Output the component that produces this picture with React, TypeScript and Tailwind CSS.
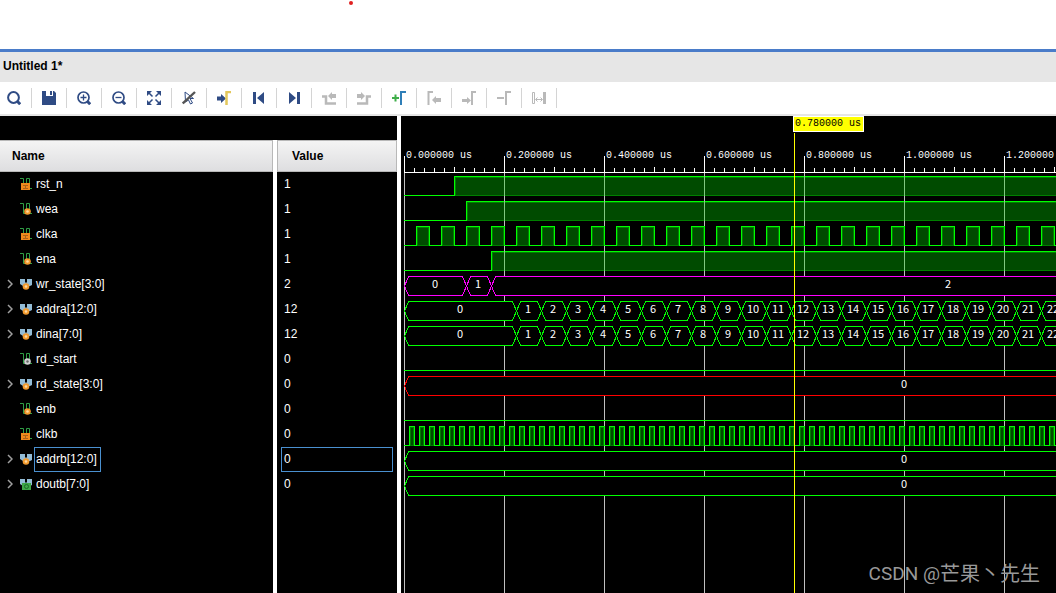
import { useEffect, useRef, useState, type ReactNode } from "react";
import clsx from "clsx";

type Badge = "box" | "dot" | "grey" | "green";

type Segment = { from: number; to: number; value: string };

type Wave =
  | { kind: "step"; rise: number }
  | { kind: "clock"; first: number; high: number; period: number }
  | { kind: "low" }
  | { kind: "bus"; color: string; segments: Segment[] };

type Signal = { name: string; value: string; badge: Badge; bus?: boolean; wave: Wave };

const ROW = 25;
const GREEN = "#00ff00";

const counter: Segment[] = [
  { from: 0, to: 112, value: "0" },
  ...Array.from({ length: 200 }, (_, i) => ({
    from: 112 + i * 25,
    to: 137 + i * 25,
    value: String(i + 1),
  })),
];

const idle: Segment[] = [{ from: 0, to: 1000, value: "0" }];

const SIGNALS: Signal[] = [
  { name: "rst_n", value: "1", badge: "box", wave: { kind: "step", rise: 50 } },
  { name: "wea", value: "1", badge: "dot", wave: { kind: "step", rise: 62 } },
  { name: "clka", value: "1", badge: "box", wave: { kind: "clock", first: 12, high: 13, period: 25 } },
  { name: "ena", value: "1", badge: "dot", wave: { kind: "step", rise: 87 } },
  {
    name: "wr_state[3:0]",
    value: "2",
    badge: "dot",
    bus: true,
    wave: {
      kind: "bus",
      color: "#ff00ff",
      segments: [
        { from: 0, to: 62, value: "0" },
        { from: 62, to: 87, value: "1" },
        { from: 87, to: 1001, value: "2" },
      ],
    },
  },
  { name: "addra[12:0]", value: "12", badge: "dot", bus: true, wave: { kind: "bus", color: GREEN, segments: counter } },
  { name: "dina[7:0]", value: "12", badge: "dot", bus: true, wave: { kind: "bus", color: GREEN, segments: counter } },
  { name: "rd_start", value: "0", badge: "grey", wave: { kind: "low" } },
  { name: "rd_state[3:0]", value: "0", badge: "dot", bus: true, wave: { kind: "bus", color: "#ff0000", segments: idle } },
  { name: "enb", value: "0", badge: "dot", wave: { kind: "low" } },
  { name: "clkb", value: "0", badge: "box", wave: { kind: "clock", first: 5, high: 5, period: 10 } },
  { name: "addrb[12:0]", value: "0", badge: "dot", bus: true, wave: { kind: "bus", color: GREEN, segments: idle } },
  { name: "doutb[7:0]", value: "0", badge: "green", bus: true, wave: { kind: "bus", color: GREEN, segments: idle } },
];

const NAVY = "#2f4b84";
const GREY = "#b9b9b9";

const TOOLS: { label: string; icon: ReactNode; disabled?: boolean }[] = [
  {
    label: "Find",
    icon: (
      <g fill="none" stroke={NAVY} strokeWidth="2">
        <circle cx="6.5" cy="6.5" r="5.4" />
        <path d="M10.5 10.5l2.7 2.7" strokeWidth="3" />
      </g>
    ),
  },
  {
    label: "Save",
    icon: <path d="M0 0h4v5h7V0h1l2 2v12H0zM8 0h2v4H8z" fill={NAVY} />,
  },
  {
    label: "Zoom in",
    icon: (
      <g fill="none" stroke={NAVY}>
        <circle cx="6.5" cy="6.5" r="5.5" strokeWidth="1.7" />
        <path d="M10.5 10.5l2.7 2.7" strokeWidth="3" />
        <path d="M3.5 6.5h6M6.5 3.5v6" strokeWidth="1.3" />
      </g>
    ),
  },
  {
    label: "Zoom out",
    icon: (
      <g fill="none" stroke={NAVY}>
        <circle cx="6.5" cy="6.5" r="5.5" strokeWidth="1.7" />
        <path d="M10.5 10.5l2.7 2.7" strokeWidth="3" />
        <path d="M3.5 6.5h6" strokeWidth="1.3" />
      </g>
    ),
  },
  {
    label: "Zoom fit",
    icon: (
      <g fill={NAVY} stroke={NAVY}>
        <path d="M0 0h5L0 5zM14 0v5L9 0zM0 14V9l5 5zM14 14H9l5-5z" stroke="none" />
        <path d="M1 1l4.5 4.5M13 1L8.5 5.5M1 13l4.5-4.5M13 13L8.5 8.5" strokeWidth="1.5" />
      </g>
    ),
  },
  {
    label: "Select area",
    icon: (
      <g fill="none">
        <path d="M3 1l8.5 6.5H8l2.5 4.5-2 1L6.5 9 3.5 11z" stroke={NAVY} />
        <path d="M.8 12.5L13 1" stroke="#555" strokeWidth="2.4" />
      </g>
    ),
  },
  {
    label: "Go to cursor",
    icon: (
      <g>
        <path d="M0 5.5h4V3l5 4.5-5 4.5V9.5H0z" fill={NAVY} />
        <path d="M9.5 14V1H14" stroke="#e3c75b" strokeWidth="2.5" fill="none" />
      </g>
    ),
  },
  { label: "Go to start", icon: <path d="M1 1h3v12H1zM12 1v12L5 7z" fill={NAVY} /> },
  { label: "Go to end", icon: <path d="M10 1h3v12h-3zM2 1v12l7-6z" fill={NAVY} /> },
  {
    label: "Previous transition",
    disabled: true,
    icon: (
      <g>
        <path d="M0 5.5h4v7h10" fill="none" stroke={GREY} strokeWidth="2.5" />
        <path d="M6 5l4-4v2h4v4h-4v2z" fill={GREY} />
      </g>
    ),
  },
  {
    label: "Next transition",
    disabled: true,
    icon: (
      <g>
        <path d="M0 12.5h10v-7h4" fill="none" stroke={GREY} strokeWidth="2.5" />
        <path d="M8 5L4 1v2H0v4h4v2z" fill={GREY} />
      </g>
    ),
  },
  {
    label: "Add marker",
    icon: (
      <g fill="none">
        <path d="M0 7h7M3.5 3.5v7" stroke="#3fae49" strokeWidth="2" />
        <path d="M9 14V1h5" stroke="#2f7fb8" strokeWidth="2" />
      </g>
    ),
  },
  {
    label: "Previous marker",
    disabled: true,
    icon: (
      <g>
        <path d="M1.5 14V1H6" fill="none" stroke={GREY} strokeWidth="2" />
        <path d="M5 9l4-4v2h5v4H9v2z" fill={GREY} />
      </g>
    ),
  },
  {
    label: "Next marker",
    disabled: true,
    icon: (
      <g>
        <path d="M10 14V1h4" fill="none" stroke={GREY} strokeWidth="2" />
        <path d="M9 9.500L5 6v2H0v3h5v2z" fill={GREY} />
      </g>
    ),
  },
  {
    label: "Remove marker",
    disabled: true,
    icon: (
      <g fill="none" stroke={GREY} strokeWidth="2">
        <path d="M0 7h7" />
        <path d="M9 14V1h5" />
      </g>
    ),
  },
  {
    label: "Swap cursors",
    disabled: true,
    icon: (
      <g fill="none" stroke={GREY}>
        <path d="M.5 1.5h2v11h-2z" />
        <path d="M12.5 1v12" strokeWidth="3" />
        <path d="M4 8.5h6M5.5 6.5l-2 2 2 2M8.5 6.5l2 2-2 2" />
      </g>
    ),
  },
];

function SignalIcon({ signal }: { signal: Signal }) {
  const { badge, bus } = signal;
  const cx = bus ? 6 : 7.5;
  return (
    <svg width="12" height="12" viewBox="0 0 12 12" className="mb-px shrink-0" aria-hidden="true">
      {bus ? (
        <path d="M0 1h5v3l1 1 1-1V1h5v6l-2 1H3L0 6z" fill="#93bcd6" />
      ) : (
        <path d="M0 .5h3.500v10h3V.5h3v10H12" fill="none" stroke="#2f9e44" />
      )}
      {badge === "box" && (
        <g>
          <path d="M1 5h9v7H1z" fill="#f08a1c" />
          <path d="M3 7.500h5M3 10.500h5M5.500 7.500v3" stroke="#a8621a" />
        </g>
      )}
      {badge === "green" && (
        <g>
          <path d="M2 5h9v7H2z" fill="#3fa648" />
          <circle cx="6.500" cy="8.500" r="2" fill="none" stroke="#1d6a2a" />
        </g>
      )}
      {badge === "dot" && (
        <g>
          <circle cx={cx} cy="8.500" r="3.300" fill="#f29a2e" />
          <circle cx={cx} cy="8.500" r="1.300" fill="#ffd9a0" />
        </g>
      )}
      {badge === "grey" && (
        <g>
          <circle cx={cx} cy="8.500" r="3.300" fill="#d0d0d0" />
          <circle cx={cx} cy="8.500" r="1.200" fill="#666" />
        </g>
      )}
    </svg>
  );
}

function Pulse({ from, to }: { from: number; to: number }) {
  return (
    <g>
      <rect x={from} y={4} width={to - from + 1} height={20} fill={GREEN} />
      <rect x={from + 1} y={5} width={to - from - 1} height={19} fill="#008000" />
      <rect x={from + 2} y={6} width={to - from - 3} height={17} fill="#004b00" />
    </g>
  );
}

function BusTrace({ color, segments, end }: { color: string; segments: Segment[]; end: number }) {
  return (
    <g>
      <rect x={1} y={4} width={end} height={20} fill="#000" />
      {segments
        .filter((s) => s.from < end)
        .map(({ from, to, value }) => {
          const last = to === segments[segments.length - 1].to;
          const edge = last ? end + 8 : to;
          const mid = Math.floor((from + to) / 2);
          return (
            <g key={from}>
              <rect x={from + 4} y={4} width={edge - from - 7} height={1} fill={color} />
              <rect x={from + 4} y={23} width={edge - from - 7} height={1} fill={color} />
              <path
                d={`M${from + 4} 4L${from} 13.5L${from + 4} 23M${edge - 4} 4L${edge} 13.5L${edge - 4} 23`}
                transform="translate(.5 .5)"
                fill="none"
                stroke={color}
                shapeRendering="crispEdges"
              />
              {mid < end && (
                <text x={mid} y={16} textAnchor="middle" fill="#fff">
                  {value}
                </text>
              )}
            </g>
          );
        })}
    </g>
  );
}

function Trace({ wave, end }: { wave: Wave; end: number }) {
  if (wave.kind === "bus") return <BusTrace color={wave.color} segments={wave.segments} end={end} />;
  if (wave.kind === "low") return <rect y={23} width={end} height={1} fill={GREEN} />;
  if (wave.kind === "step") {
    return (
      <g>
        <rect y={23} width={wave.rise} height={1} fill={GREEN} />
        <Pulse from={wave.rise} to={end + 8} />
      </g>
    );
  }
  const count = Math.ceil((end - wave.first) / wave.period);
  return (
    <g>
      <rect y={23} width={end} height={1} fill={GREEN} />
      {Array.from({ length: count }, (_, i) => {
        const from = wave.first + i * wave.period;
        return <Pulse key={i} from={from} to={from + wave.high} />;
      })}
    </g>
  );
}

function Waveform() {
  const ref = useRef<HTMLDivElement>(null);
  const [width, setWidth] = useState(655);

  useEffect(() => {
    const el = ref.current;
    if (!el) return;
    const observer = new ResizeObserver(() => setWidth(Math.max(el.clientWidth, 100)));
    observer.observe(el);
    return () => observer.disconnect();
  }, []);

  const end = width - 3;
  const majors = Array.from({ length: Math.ceil(end / 100) }, (_, i) => i * 100);
  const minors = Array.from({ length: Math.ceil(end / 10) }, (_, i) => i * 10);

  return (
    <div ref={ref} className="min-w-0 flex-1">
      <svg
        className="block h-full w-full font-['Liberation_Mono',monospace] text-[10px]"
        role="img"
        aria-label="Waveform"
      >
        <g transform="translate(3 0)">
          {majors.map((x) => (
            <rect key={x} x={x} y={57} width={1} height={2000} fill="#c0c0c0" />
          ))}
          <g className="font-['Noto_Sans_CJK_SC',sans-serif] text-[11px]">
            {SIGNALS.map((s, i) => (
              <g key={s.name} transform={`translate(0 ${56 + i * ROW})`}>
                <Trace wave={s.wave} end={end} />
              </g>
            ))}
          </g>
          {/* Grid lines show through the filled high levels */}
          {[0, 1, 3].map((row) =>
            majors.slice(1).map((x) => (
              <rect key={`${row}-${x}`} x={x} y={60 + row * ROW} width={1} height={20} fill="#80c880" />
            )),
          )}
          <rect y={56} width={end} height={1} fill="#fff" />
          {minors.map((x) => (
            <rect key={x} x={x} y={x % 50 ? 52 : 51} width={1} height={5} fill="#fff" />
          ))}
          {majors.map((x) => (
            <g key={x} fill="#fff">
              <rect x={x} y={40} width={1} height={16} />
              <text x={x + 2} y={42}>{`${(x / 500).toFixed(6)} us`}</text>
            </g>
          ))}
          <rect x={390} y={17} width={1} height={2000} fill="#ffff00" />
          <rect x={389} y={0} width={71} height={16} fill="#fff" />
          <rect x={390} y={1} width={69} height={14} fill="#ffff00" />
          <text x={391} y={10} fill="#000">
            0.780000 us
          </text>
        </g>
      </svg>
    </div>
  );
}

function Toolbar() {
  return (
    <div className="flex h-[34px] items-center border-b-2 border-[#e6e6e6] bg-white pl-[7px]">
      {TOOLS.map((tool) => (
        <div key={tool.label} className="flex items-center">
          <button type="button" aria-label={tool.label} disabled={tool.disabled}>
            <svg width="14" height="14" viewBox="0 0 14 14" className="block">
              {tool.icon}
            </svg>
          </button>
          <span className="mx-[10px] h-5 w-px bg-[#d4d4d4]" />
        </div>
      ))}
    </div>
  );
}

export default function App() {
  const [selected, setSelected] = useState("addrb[12:0]");

  return (
    <div className="relative flex min-h-screen flex-col overflow-hidden bg-white font-['Liberation_Sans',Arial,sans-serif] text-xs text-black">
      <div className="h-[49px]">
        <svg className="block h-full w-full" aria-hidden="true">
          <circle cx="351" cy="3" r="2" fill="#e02020" />
        </svg>
      </div>
      <div className="flex h-[33px] items-center border-t-[3px] border-[#4a7cc9] bg-[#e6e6e6] px-[3px] pb-0.5 font-bold">
        <h1>Untitled 1*</h1>
      </div>
      <Toolbar />

      <main className="flex flex-1 bg-black">
        {/* Signal names and values */}
        <div className="flex w-[397px] shrink-0 flex-col pt-6">
          <table className="w-full table-fixed border-separate border-spacing-0 text-left text-white">
            <colgroup>
              <col className="w-[277px]" />
              <col />
            </colgroup>
            <thead>
              <tr className="h-8 text-black">
                <th className="border-r-4 border-white p-0">
                  <div className="flex h-8 items-center border-y border-r border-[#b8b8b8] bg-linear-to-b from-[#f4f4f4] to-[#dedee0] pl-3">
                    Name
                  </div>
                </th>
                <th className="p-0">
                  <div className="flex h-8 items-center border border-[#b8b8b8] bg-linear-to-b from-[#f4f4f4] to-[#dedee0] pl-3.5">
                    Value
                  </div>
                </th>
              </tr>
            </thead>
            <tbody>
              {SIGNALS.map((s) => {
                const active = s.name === selected;
                return (
                  <tr key={s.name} onClick={() => setSelected(s.name)}>
                    <td className="border-r-4 border-white p-0">
                      <div className="flex h-[25px] items-center pl-[7px]">
                        <span className="mr-[7px] w-1.5">
                          {s.bus && (
                            <svg width="6" height="10" viewBox="0 0 6 10" className="mb-px block">
                              <path d="M1 1l4 4-4 4" fill="none" stroke="#a0a0a0" strokeWidth="1.5" />
                            </svg>
                          )}
                        </span>
                        <SignalIcon signal={s} />
                        <span
                          className={clsx(
                            "ml-0.5 flex h-[25px] items-center border pr-[3px] pb-0.5 pl-px",
                            active ? "border-[#4a90d0]" : "border-transparent",
                          )}
                        >
                          {s.name}
                        </span>
                      </div>
                    </td>
                    <td className="py-0 pr-1 pl-1">
                      <div
                        className={clsx(
                          "flex h-[25px] items-center border pb-0.5 pl-0.5",
                          active ? "border-[#4a90d0]" : "border-transparent",
                        )}
                      >
                        {s.value}
                      </div>
                    </td>
                  </tr>
                );
              })}
            </tbody>
          </table>
          <div className="ml-[273px] w-1 flex-1 bg-white" />
        </div>

        <div className="w-1 shrink-0 bg-white" />

        <Waveform />
      </main>

      <p className="absolute right-4 bottom-1.5 flex items-center font-['Roboto',sans-serif] text-[19px] whitespace-pre text-[#999]">
        CSDN @
        <span className="font-['Noto_Sans_CJK_SC',sans-serif] text-[20px]">芒果丶先生</span>
      </p>
    </div>
  );
}
